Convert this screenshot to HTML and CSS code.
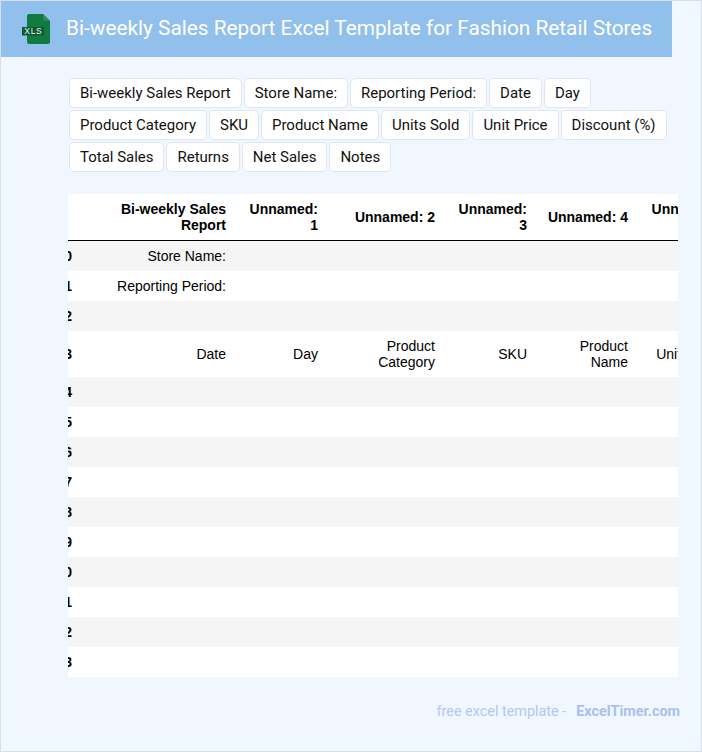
FILE: index.html
```
<!DOCTYPE html>
<html lang="en">
<head>
<meta charset="utf-8">
<title>Bi-weekly Sales Report Excel Template for Fashion Retail Stores</title>
<link rel="stylesheet" href="styles.css">
</head>
<body>
<div class="page">
  <header class="banner">
    <svg class="file-icon" width="28" height="30" viewBox="0 0 28 30" aria-hidden="true">
      <path class="file-body" d="M7 0H21L28 7V28Q28 30 26 30H7Q5 30 5 28V2Q5 0 7 0Z"/>
      <path class="file-fold" d="M21 0L28 7H23Q21 7 21 5Z"/>
      <rect class="file-band" x="0" y="13" width="22" height="8.500"/>
      <text class="file-label" x="11.300" y="20.400" text-anchor="middle">XLS</text>
    </svg>
    <h1 class="title">Bi-weekly Sales Report Excel Template for Fashion Retail Stores</h1>
  </header>
  <main class="content">
    <div class="tags">
      <span class="tag">Bi-weekly Sales Report</span>
      <span class="tag">Store Name:</span>
      <span class="tag">Reporting Period:</span>
      <span class="tag">Date</span>
      <span class="tag">Day</span>
      <span class="tag">Product Category</span>
      <span class="tag">SKU</span>
      <span class="tag">Product Name</span>
      <span class="tag">Units Sold</span>
      <span class="tag">Unit Price</span>
      <span class="tag">Discount (%)</span>
      <span class="tag">Total Sales</span>
      <span class="tag">Returns</span>
      <span class="tag">Net Sales</span>
      <span class="tag">Notes</span>
    </div>
    <div class="table-wrap">
      <table class="sheet">
        <colgroup>
          <col class="c-index"><col class="c-0"><col class="c-1"><col class="c-2"><col class="c-3"><col class="c-4"><col class="c-5">
        </colgroup>
        <thead>
          <tr><th></th><th>Bi-weekly Sales Report</th><th>Unnamed: 1</th><th>Unnamed: 2</th><th>Unnamed: 3</th><th>Unnamed: 4</th><th>Unnamed: 5</th></tr>
        </thead>
        <tbody>
          <tr><th>0</th><td>Store Name:</td><td></td><td></td><td></td><td></td><td></td></tr>
          <tr><th>1</th><td>Reporting Period:</td><td></td><td></td><td></td><td></td><td></td></tr>
          <tr><th>2</th><td></td><td></td><td></td><td></td><td></td><td></td></tr>
          <tr><th>3</th><td>Date</td><td>Day</td><td>Product Category</td><td>SKU</td><td>Product Name</td><td>Units Sold</td></tr>
          <tr><th>4</th><td></td><td></td><td></td><td></td><td></td><td></td></tr>
          <tr><th>5</th><td></td><td></td><td></td><td></td><td></td><td></td></tr>
          <tr><th>6</th><td></td><td></td><td></td><td></td><td></td><td></td></tr>
          <tr><th>7</th><td></td><td></td><td></td><td></td><td></td><td></td></tr>
          <tr><th>8</th><td></td><td></td><td></td><td></td><td></td><td></td></tr>
          <tr><th>9</th><td></td><td></td><td></td><td></td><td></td><td></td></tr>
          <tr><th>10</th><td></td><td></td><td></td><td></td><td></td><td></td></tr>
          <tr><th>11</th><td></td><td></td><td></td><td></td><td></td><td></td></tr>
          <tr><th>12</th><td></td><td></td><td></td><td></td><td></td><td></td></tr>
          <tr><th>13</th><td></td><td></td><td></td><td></td><td></td><td></td></tr>
        </tbody>
      </table>
    </div>
    <footer class="credit">
      <span class="credit-text">free excel template -</span>
      <a class="credit-link" href="#">ExcelTimer.com</a>
    </footer>
  </main>
</div>
</body>
</html>
```
FILE: styles.css
```
* { box-sizing: border-box; }
html, body { margin: 0; padding: 0; }
body { font-family: Roboto, "Liberation Sans", sans-serif; background: #f0f7ff; }

.page {
  width: 702px;
  height: 752px;
  overflow: hidden;
  background: #f0f7ff;
  border: 1px solid #d5e0ef;
}

.banner {
  display: flex;
  align-items: center;
  width: 671px;
  height: 56px;
  padding-left: 21px;
  background: #92c0ec;
}
.file-icon { flex: none; margin-right: 17px; }
.file-body { fill: #107a41; }
.file-fold { fill: #2f8a59; }
.file-band { fill: #0c5a31; }
.file-label { font-family: "Liberation Sans", sans-serif; font-size: 8.500px; font-weight: 400; letter-spacing: .6px; fill: #eef6f1; }
.title { margin: 0 0 2px -1px; font-size: 20.800px; font-weight: 400; line-height: 30px; color: #fff; white-space: nowrap; }

.content { display: flex; flex-direction: column; padding: 21px 0 0 67px; }

.tags { display: flex; flex-wrap: wrap; gap: 2px; width: 604px; margin-left: 1px; }
.tag {
  height: 30px;
  padding: 0 10px;
  border: 1px solid #dde6f2;
  border-radius: 5px;
  background: #fff;
  color: #111;
  font-size: 14.970px;
  line-height: 28px;
  white-space: nowrap;
}

.table-wrap { width: 610px; margin-top: 22px; overflow: hidden; background: #fff; }
.sheet {
  width: 688px;
  margin-left: -26px;
  table-layout: fixed;
  border-collapse: collapse;
  font-family: "Liberation Sans", Arial, sans-serif;
  font-size: 14px;
  line-height: 16px;
  color: #000;
}
.c-index { width: 40px; }
.c-0 { width: 154px; }
.c-1 { width: 92px; }
.c-2 { width: 117px; }
.c-3 { width: 92px; }
.c-4 { width: 101px; }
.c-5 { width: 92px; }
.sheet th, .sheet td { padding: 7px 10px; text-align: right; vertical-align: middle; font-weight: 400; height: 30px; }
.sheet th { font-weight: 700; }
.sheet thead tr { border-bottom: 1px solid #000; }
.sheet tbody tr:nth-child(odd) { background: #f5f5f5; }

.credit { display: flex; justify-content: flex-end; gap: 10px; width: 612px; margin-top: 26px; font-size: 14.400px; line-height: 18px; }
.credit-text { color: #b3c8f2; }
.credit-link { color: #a9c0f0; font-weight: 700; text-decoration: none; }
```
